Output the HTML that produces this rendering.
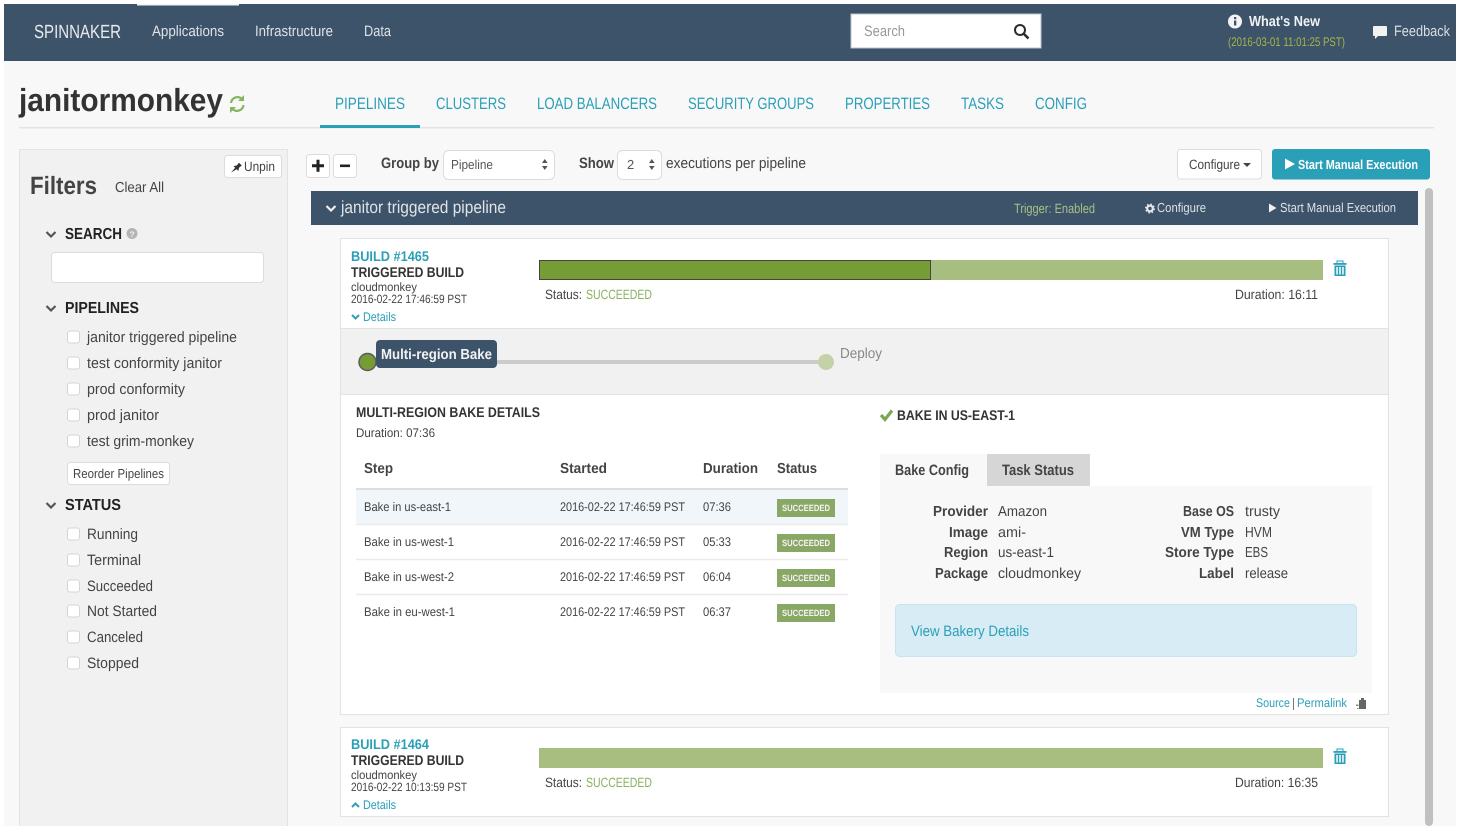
<!DOCTYPE html>
<html><head><meta charset="utf-8"><title>Spinnaker</title>
<style>
html,body{margin:0;padding:0;background:#fff;width:1462px;height:832px;overflow:hidden}
svg{display:block;position:absolute;left:0;top:0}
text{font-family:"Liberation Sans",sans-serif;font-size:14px;fill:#444;text-rendering:geometricPrecision}
.b{font-weight:bold}
.t{fill:#2a9fb8}
.w{fill:#e4e8ec}
.k{fill:#333}
</style></head><body>
<svg width="1462" height="832" viewBox="0 0 1462 832" xmlns="http://www.w3.org/2000/svg">
<defs>
<g id="trash" fill="#2a9fb8"><rect x="-6.500" y="-6" width="13" height="1.800"/><rect x="-3" y="-8" width="6" height="2.500" fill="none" stroke="#2a9fb8"/><path d="M-5.500-3.500h11v10.500h-11zM-3.700-2v7.500h1.500v-7.500zM-.75-2v7.500h1.500v-7.500zM2.200-2v7.500h1.500v-7.500z" fill-rule="evenodd"/></g>
<path id="chev" d="M-4.500-2L0 2.500 4.500-2" fill="none" stroke-width="2.200"/>
<rect id="cb" x="0" y="-6.500" width="12" height="12" rx="2.500" fill="#fff" stroke="#d4d4d4"/>
</defs>

<rect x="4" y="4" width="1452" height="822" fill="#f8f8f8"/>

<!-- top nav -->
<rect x="4" y="4" width="1452" height="57" fill="#3c5369"/>
<rect x="137" y="4" width="102" height="1.500" fill="#f4f4f4"/>
<text x="34" y="38" style="font-size:19px;fill:#e8ebee" textLength="87" lengthAdjust="spacingAndGlyphs">SPINNAKER</text>
<text x="152" y="36" style="font-size:15px;fill:#dfe3e7" textLength="72" lengthAdjust="spacingAndGlyphs">Applications</text>
<text x="255" y="36" style="font-size:15px;fill:#dfe3e7" textLength="78" lengthAdjust="spacingAndGlyphs">Infrastructure</text>
<text x="364" y="36" style="font-size:15px;fill:#dfe3e7" textLength="27" lengthAdjust="spacingAndGlyphs">Data</text>
<rect x="851" y="14" width="190" height="34" fill="#fff" stroke="#bcc6cf"/>
<text x="864" y="36" style="font-size:15px;fill:#999" textLength="41" lengthAdjust="spacingAndGlyphs">Search</text>
<circle cx="1020" cy="30" r="5" fill="none" stroke="#2b2b2b" stroke-width="2"/><path d="M1024 34l4.500 4.500" stroke="#2b2b2b" stroke-width="2.600"/>
<circle cx="1235" cy="21.500" r="7" fill="#f4f4f4"/><rect x="1234" y="20.500" width="2.300" height="5" fill="#3c5369"/><rect x="1234" y="17" width="2.300" height="2.200" fill="#3c5369"/>
<text x="1249" y="26" class="b" style="font-size:14.500px;fill:#f0f2f4" textLength="71" lengthAdjust="spacingAndGlyphs">What's New</text>
<text x="1228" y="46" style="font-size:12.500px;fill:#a6b548" textLength="117" lengthAdjust="spacingAndGlyphs">(2016-03-01 11:01:25 PST)</text>
<path d="M1374 26h12a1 1 0 0 1 1 1v8a1 1 0 0 1-1 1h-8l-3 3v-3h-1a1 1 0 0 1-1-1v-8a1 1 0 0 1 1-1z" fill="#f2f2f2"/>
<text x="1394" y="36" style="font-size:15px;fill:#d8dde2" textLength="56" lengthAdjust="spacingAndGlyphs">Feedback</text>

<!-- title + tabs -->
<text x="19" y="111" class="b" style="font-size:32px;fill:#333" textLength="204" lengthAdjust="spacingAndGlyphs">janitormonkey</text>
<g fill="none" stroke="#86b660" stroke-width="2.200"><path d="M231 103a6.500 6.500 0 0 1 11-4"/><path d="M243.500 105a6.500 6.500 0 0 1-11 4"/></g>
<path d="M244 95v6h-6zM230 113v-6h6z" fill="#86b660"/>
<rect x="19" y="127" width="1415" height="1.500" fill="#e3e3e3"/>
<rect x="320" y="125" width="100" height="3" fill="#2a9fb8"/>
<g>
<text x="335" y="109" class="t" style="font-size:16.500px" textLength="70" lengthAdjust="spacingAndGlyphs">PIPELINES</text>
<text x="436" y="109" class="t" style="font-size:16.500px" textLength="70" lengthAdjust="spacingAndGlyphs">CLUSTERS</text>
<text x="537" y="109" class="t" style="font-size:16.500px" textLength="120" lengthAdjust="spacingAndGlyphs">LOAD BALANCERS</text>
<text x="688" y="109" class="t" style="font-size:16.500px" textLength="126" lengthAdjust="spacingAndGlyphs">SECURITY GROUPS</text>
<text x="845" y="109" class="t" style="font-size:16.500px" textLength="85" lengthAdjust="spacingAndGlyphs">PROPERTIES</text>
<text x="961" y="109" class="t" style="font-size:16.500px" textLength="43" lengthAdjust="spacingAndGlyphs">TASKS</text>
<text x="1035" y="109" class="t" style="font-size:16.500px" textLength="52" lengthAdjust="spacingAndGlyphs">CONFIG</text>
</g>

<!-- filters panel -->
<rect x="19.500" y="149.500" width="268" height="677" fill="#f1f1f1" stroke="#e3e3e3"/>
<rect x="224.500" y="155.500" width="57" height="22" rx="3" fill="#fff" stroke="#dcdcdc"/>
<path d="M231 172.500l4.200-4.700-1.700-1.700 3.200-.6 2.300-2.800 2.800 2.800-2.800 2.300-.6 3.200-1.700-1.700z" fill="#333"/>
<text x="244" y="171" style="font-size:13.500px;fill:#444" textLength="31" lengthAdjust="spacingAndGlyphs">Unpin</text>
<text x="30" y="194" class="b" style="font-size:25px;fill:#444" textLength="67" lengthAdjust="spacingAndGlyphs">Filters</text>
<text x="115" y="192" style="font-size:14.500px;fill:#444" textLength="49" lengthAdjust="spacingAndGlyphs">Clear All</text>

<use href="#chev" x="51" y="234" stroke="#555"/>
<text x="65" y="239" class="b" style="font-size:16px;fill:#222" textLength="57" lengthAdjust="spacingAndGlyphs">SEARCH</text>
<circle cx="132" cy="233.500" r="5.500" fill="#b4b4b4"/><text x="129.800" y="237" class="b" style="font-size:8px;fill:#f1f1f1">?</text>
<rect x="51.500" y="252.500" width="212" height="30" rx="3" fill="#fff" stroke="#dcdcdc"/>

<use href="#chev" x="51" y="308" stroke="#555"/>
<text x="65" y="313" class="b" style="font-size:16px;fill:#222" textLength="74" lengthAdjust="spacingAndGlyphs">PIPELINES</text>
<use href="#cb" x="67.500" y="337.500"/><text x="87" y="342" style="font-size:15px" textLength="150" lengthAdjust="spacingAndGlyphs">janitor triggered pipeline</text>
<use href="#cb" x="67.500" y="363.500"/><text x="87" y="368" style="font-size:15px" textLength="135" lengthAdjust="spacingAndGlyphs">test conformity janitor</text>
<use href="#cb" x="67.500" y="389.500"/><text x="87" y="394" style="font-size:15px" textLength="98" lengthAdjust="spacingAndGlyphs">prod conformity</text>
<use href="#cb" x="67.500" y="415.500"/><text x="87" y="420" style="font-size:15px" textLength="72" lengthAdjust="spacingAndGlyphs">prod janitor</text>
<use href="#cb" x="67.500" y="441.500"/><text x="87" y="446" style="font-size:15px" textLength="107" lengthAdjust="spacingAndGlyphs">test grim-monkey</text>
<rect x="67.500" y="462.500" width="102" height="22" rx="3" fill="#fff" stroke="#dcdcdc"/>
<text x="73" y="478" style="font-size:13px" textLength="91" lengthAdjust="spacingAndGlyphs">Reorder Pipelines</text>

<use href="#chev" x="51" y="505" stroke="#555"/>
<text x="65" y="510" class="b" style="font-size:16px;fill:#222" textLength="56" lengthAdjust="spacingAndGlyphs">STATUS</text>
<use href="#cb" x="67.500" y="534.500"/><text x="87" y="539" style="font-size:15px" textLength="51" lengthAdjust="spacingAndGlyphs">Running</text>
<use href="#cb" x="67.500" y="560.500"/><text x="87" y="565" style="font-size:15px" textLength="54" lengthAdjust="spacingAndGlyphs">Terminal</text>
<use href="#cb" x="67.500" y="586.500"/><text x="87" y="591" style="font-size:15px" textLength="66" lengthAdjust="spacingAndGlyphs">Succeeded</text>
<use href="#cb" x="67.500" y="611.500"/><text x="87" y="616" style="font-size:15px" textLength="70" lengthAdjust="spacingAndGlyphs">Not Started</text>
<use href="#cb" x="67.500" y="637.500"/><text x="87" y="642" style="font-size:15px" textLength="56" lengthAdjust="spacingAndGlyphs">Canceled</text>
<use href="#cb" x="67.500" y="663.500"/><text x="87" y="668" style="font-size:15px" textLength="52" lengthAdjust="spacingAndGlyphs">Stopped</text>

<!-- toolbar -->
<rect x="306.500" y="154.500" width="23" height="23" rx="3" fill="#fff" stroke="#dcdcdc"/>
<path d="M312 165.800h12M318 159.800v12" stroke="#222" stroke-width="3"/>
<rect x="333.500" y="154.500" width="23" height="23" rx="3" fill="#fff" stroke="#dcdcdc"/>
<path d="M340 165.800h10" stroke="#222" stroke-width="2.600"/>
<text x="381" y="168" class="b" style="font-size:15px" textLength="58" lengthAdjust="spacingAndGlyphs">Group by</text>
<rect x="443.500" y="150.500" width="111" height="29" rx="5" fill="#fff" stroke="#dcdcdc"/>
<text x="451" y="169" style="font-size:13px;fill:#555" textLength="42" lengthAdjust="spacingAndGlyphs">Pipeline</text>
<path d="M542 163l2.800-4 2.800 4zM542 166l2.800 4 2.800-4z" fill="#555"/>
<text x="579" y="168" class="b" style="font-size:15px" textLength="35" lengthAdjust="spacingAndGlyphs">Show</text>
<rect x="617.500" y="150.500" width="44" height="29" rx="5" fill="#fff" stroke="#dcdcdc"/>
<text x="627" y="169" style="font-size:13px;fill:#555">2</text>
<path d="M649 163l2.800-4 2.800 4zM649 166l2.800 4 2.800-4z" fill="#555"/>
<text x="666" y="168" style="font-size:15px" textLength="140" lengthAdjust="spacingAndGlyphs">executions per pipeline</text>
<rect x="1177.500" y="149.500" width="84" height="29.500" rx="3" fill="#fff" stroke="#dcdcdc"/>
<text x="1189" y="169" style="font-size:13.500px" textLength="51" lengthAdjust="spacingAndGlyphs">Configure</text>
<path d="M1243 163h8l-4 4z" fill="#444"/>
<rect x="1272" y="149" width="158" height="30.500" rx="3" fill="#2a9fb8"/>
<path d="M1285 158.500l10 5.500-10 5.500z" fill="#fff"/>
<text x="1298" y="169" class="b" style="font-size:13px;fill:#fff" textLength="120" lengthAdjust="spacingAndGlyphs">Start Manual Execution</text>

<!-- scrollbar -->
<rect x="1425" y="188" width="8" height="638" rx="4" fill="#c0c0c0"/>

<!-- pipeline header -->
<rect x="311" y="191" width="1107" height="34" fill="#3c5369"/>
<use href="#chev" x="331" y="208" stroke="#f0f0f0"/>
<text x="341" y="213" style="font-size:17.500px;fill:#e0e4e8" textLength="165" lengthAdjust="spacingAndGlyphs">janitor triggered pipeline</text>
<text x="1014" y="213" style="font-size:13.500px;fill:#a8c088" textLength="81" lengthAdjust="spacingAndGlyphs">Trigger: Enabled</text>
<circle cx="1150" cy="208.500" r="2.800" fill="none" stroke="#e8e8e8" stroke-width="2.200"/>
<circle cx="1150" cy="208.500" r="4.300" fill="none" stroke="#e8e8e8" stroke-width="1.400" stroke-dasharray="1.700 1.700"/>
<text x="1157" y="212" style="font-size:13px;fill:#dde1e5" textLength="49" lengthAdjust="spacingAndGlyphs">Configure</text>
<path d="M1269 203.500l7.500 4.500-7.500 4.500z" fill="#f0f0f0"/>
<text x="1280" y="212" style="font-size:13px;fill:#dde1e5" textLength="116" lengthAdjust="spacingAndGlyphs">Start Manual Execution</text>

<!-- build 1465 -->
<rect x="340.500" y="238.500" width="1048" height="476" fill="#fff" stroke="#e2e2e2"/>
<text x="351" y="261" class="t b" style="font-size:14px" textLength="78" lengthAdjust="spacingAndGlyphs">BUILD #1465</text>
<text x="351" y="277" class="b k" style="font-size:14px" textLength="113" lengthAdjust="spacingAndGlyphs">TRIGGERED BUILD</text>
<text x="351" y="291" style="font-size:12px" textLength="66" lengthAdjust="spacingAndGlyphs">cloudmonkey</text>
<text x="351" y="303" style="font-size:12px" textLength="116" lengthAdjust="spacingAndGlyphs">2016-02-22 17:46:59 PST</text>
<path d="M352 315l3.500 3.500 3.500-3.500" fill="none" stroke="#2a9fb8" stroke-width="2"/>
<text x="363" y="321" class="t" style="font-size:12.500px" textLength="33" lengthAdjust="spacingAndGlyphs">Details</text>
<rect x="539" y="260" width="784" height="20" fill="#a8be80"/>
<rect x="539.500" y="260.500" width="391" height="19" fill="#759c35" stroke="#444"/>
<text x="545" y="299" style="font-size:13.500px" textLength="37" lengthAdjust="spacingAndGlyphs">Status:</text>
<text x="586" y="299" style="font-size:13.500px;fill:#8ab060" textLength="66" lengthAdjust="spacingAndGlyphs">SUCCEEDED</text>
<text x="1235" y="299" style="font-size:13.500px" textLength="83" lengthAdjust="spacingAndGlyphs">Duration: 16:11</text>
<use href="#trash" x="1340" y="269"/>

<!-- stage strip -->
<rect x="341" y="328" width="1047" height="67" fill="#f1f1f1"/>
<path d="M341 328.500h1047M341 394.500h1047" stroke="#e2e2e2"/>
<rect x="375" y="360" width="450" height="4" fill="#cbcbcb"/>
<circle cx="367.500" cy="362" r="8.500" fill="#759c35" stroke="#5c5c5c" stroke-width="1.500"/>
<rect x="376" y="340" width="121" height="28" rx="4" fill="#3c5369"/>
<text x="381" y="359" class="b" style="font-size:14.500px;fill:#f2f2f2" textLength="111" lengthAdjust="spacingAndGlyphs">Multi-region Bake</text>
<circle cx="826" cy="362" r="8" fill="#c5d2a8"/>
<text x="840" y="358" style="font-size:14.500px;fill:#888" textLength="42" lengthAdjust="spacingAndGlyphs">Deploy</text>

<!-- stage details -->
<text x="356" y="417" class="b k" style="font-size:14px" textLength="184" lengthAdjust="spacingAndGlyphs">MULTI-REGION BAKE DETAILS</text>
<text x="356" y="437" style="font-size:12.500px" textLength="79" lengthAdjust="spacingAndGlyphs">Duration: 07:36</text>
<text x="364" y="473" class="b" style="font-size:14.500px" textLength="29" lengthAdjust="spacingAndGlyphs">Step</text>
<text x="560" y="473" class="b" style="font-size:14.500px" textLength="47" lengthAdjust="spacingAndGlyphs">Started</text>
<text x="703" y="473" class="b" style="font-size:14.500px" textLength="55" lengthAdjust="spacingAndGlyphs">Duration</text>
<text x="777" y="473" class="b" style="font-size:14.500px" textLength="40" lengthAdjust="spacingAndGlyphs">Status</text>
<rect x="356" y="490" width="492" height="34" fill="#f0f6f9"/>
<rect x="356" y="488" width="492" height="2" fill="#dedede"/>
<path d="M356 524.500h492M356 559.500h492M356 594.500h492" stroke="#ebebeb" stroke-width="1.500"/>

<text x="364" y="511" style="font-size:12.500px" textLength="87" lengthAdjust="spacingAndGlyphs">Bake in us-east-1</text>
<text x="560" y="511" style="font-size:12.500px" textLength="125" lengthAdjust="spacingAndGlyphs">2016-02-22 17:46:59 PST</text>
<text x="703" y="511" style="font-size:12.500px" textLength="28" lengthAdjust="spacingAndGlyphs">07:36</text>
<rect x="777" y="499" width="58" height="18" fill="#8aa865"/>
<text x="782" y="511" class="b" style="font-size:9px;fill:#f4f4f4" textLength="48" lengthAdjust="spacingAndGlyphs">SUCCEEDED</text>

<text x="364" y="546" style="font-size:12.500px" textLength="90" lengthAdjust="spacingAndGlyphs">Bake in us-west-1</text>
<text x="560" y="546" style="font-size:12.500px" textLength="125" lengthAdjust="spacingAndGlyphs">2016-02-22 17:46:59 PST</text>
<text x="703" y="546" style="font-size:12.500px" textLength="28" lengthAdjust="spacingAndGlyphs">05:33</text>
<rect x="777" y="534" width="58" height="18" fill="#8aa865"/>
<text x="782" y="546" class="b" style="font-size:9px;fill:#f4f4f4" textLength="48" lengthAdjust="spacingAndGlyphs">SUCCEEDED</text>

<text x="364" y="581" style="font-size:12.500px" textLength="90" lengthAdjust="spacingAndGlyphs">Bake in us-west-2</text>
<text x="560" y="581" style="font-size:12.500px" textLength="125" lengthAdjust="spacingAndGlyphs">2016-02-22 17:46:59 PST</text>
<text x="703" y="581" style="font-size:12.500px" textLength="28" lengthAdjust="spacingAndGlyphs">06:04</text>
<rect x="777" y="569" width="58" height="18" fill="#8aa865"/>
<text x="782" y="581" class="b" style="font-size:9px;fill:#f4f4f4" textLength="48" lengthAdjust="spacingAndGlyphs">SUCCEEDED</text>

<text x="364" y="616" style="font-size:12.500px" textLength="91" lengthAdjust="spacingAndGlyphs">Bake in eu-west-1</text>
<text x="560" y="616" style="font-size:12.500px" textLength="125" lengthAdjust="spacingAndGlyphs">2016-02-22 17:46:59 PST</text>
<text x="703" y="616" style="font-size:12.500px" textLength="28" lengthAdjust="spacingAndGlyphs">06:37</text>
<rect x="777" y="604" width="58" height="18" fill="#8aa865"/>
<text x="782" y="616" class="b" style="font-size:9px;fill:#f4f4f4" textLength="48" lengthAdjust="spacingAndGlyphs">SUCCEEDED</text>

<!-- right detail -->
<path d="M881 415l4 4.500 7-9" fill="none" stroke="#78a856" stroke-width="3.200"/>
<text x="897" y="420" class="b k" style="font-size:14px" textLength="118" lengthAdjust="spacingAndGlyphs">BAKE IN US-EAST-1</text>
<rect x="880" y="454" width="107" height="32" fill="#f8f8f8"/>
<rect x="987" y="454" width="103" height="32" fill="#d6d6d6"/>
<text x="895" y="475" style="font-size:15px;font-weight:bold;fill:#444" textLength="74" lengthAdjust="spacingAndGlyphs">Bake Config</text>
<text x="1002" y="475" style="font-size:15px;font-weight:bold;fill:#444" textLength="72" lengthAdjust="spacingAndGlyphs">Task Status</text>
<rect x="880" y="486" width="492" height="207" fill="#f8f8f8"/>

<text x="933" y="516" class="b" style="font-size:14.500px" textLength="55" lengthAdjust="spacingAndGlyphs">Provider</text>
<text x="949" y="537" class="b" style="font-size:14.500px" textLength="39" lengthAdjust="spacingAndGlyphs">Image</text>
<text x="944" y="557" class="b" style="font-size:14.500px" textLength="44" lengthAdjust="spacingAndGlyphs">Region</text>
<text x="935" y="578" class="b" style="font-size:14.500px" textLength="53" lengthAdjust="spacingAndGlyphs">Package</text>
<text x="998" y="516" style="font-size:14.500px" textLength="49" lengthAdjust="spacingAndGlyphs">Amazon</text>
<text x="998" y="537" style="font-size:14.500px" textLength="28" lengthAdjust="spacingAndGlyphs">ami-</text>
<text x="998" y="557" style="font-size:14.500px" textLength="56" lengthAdjust="spacingAndGlyphs">us-east-1</text>
<text x="998" y="578" style="font-size:14.500px" textLength="83" lengthAdjust="spacingAndGlyphs">cloudmonkey</text>
<text x="1183" y="516" class="b" style="font-size:14.500px" textLength="51" lengthAdjust="spacingAndGlyphs">Base OS</text>
<text x="1181" y="537" class="b" style="font-size:14.500px" textLength="53" lengthAdjust="spacingAndGlyphs">VM Type</text>
<text x="1165" y="557" class="b" style="font-size:14.500px" textLength="69" lengthAdjust="spacingAndGlyphs">Store Type</text>
<text x="1199" y="578" class="b" style="font-size:14.500px" textLength="35" lengthAdjust="spacingAndGlyphs">Label</text>
<text x="1245" y="516" style="font-size:14.500px" textLength="35" lengthAdjust="spacingAndGlyphs">trusty</text>
<text x="1245" y="537" style="font-size:14.500px" textLength="27" lengthAdjust="spacingAndGlyphs">HVM</text>
<text x="1245" y="557" style="font-size:14.500px" textLength="23" lengthAdjust="spacingAndGlyphs">EBS</text>
<text x="1245" y="578" style="font-size:14.500px" textLength="43" lengthAdjust="spacingAndGlyphs">release</text>

<rect x="895.500" y="604.500" width="461" height="52" rx="4" fill="#d8ecf5" stroke="#c5e4ee"/>
<text x="911" y="636" class="t" style="font-size:15px" textLength="118" lengthAdjust="spacingAndGlyphs">View Bakery Details</text>
<text x="1256" y="707" class="t" style="font-size:12.500px" textLength="34" lengthAdjust="spacingAndGlyphs">Source</text>
<rect x="1293" y="698" width="1" height="12" fill="#777"/>
<text x="1297" y="707" class="t" style="font-size:12.500px" textLength="50" lengthAdjust="spacingAndGlyphs">Permalink</text>
<path d="M1359 700h2v-2h3v2h2v9h-7z" fill="#666"/>
<path d="M1356 704.500h2.500v1.500h-2.500zM1357 708h1.500v1h-1.500z" fill="#888"/>

<!-- build 1464 -->
<rect x="340.500" y="727.500" width="1048" height="89" fill="#fff" stroke="#e2e2e2"/>
<text x="351" y="749" class="t b" style="font-size:14px" textLength="78" lengthAdjust="spacingAndGlyphs">BUILD #1464</text>
<text x="351" y="765" class="b k" style="font-size:14px" textLength="113" lengthAdjust="spacingAndGlyphs">TRIGGERED BUILD</text>
<text x="351" y="779" style="font-size:12px" textLength="66" lengthAdjust="spacingAndGlyphs">cloudmonkey</text>
<text x="351" y="791" style="font-size:12px" textLength="116" lengthAdjust="spacingAndGlyphs">2016-02-22 10:13:59 PST</text>
<path d="M352 807l3.500-3.500 3.500 3.500" fill="none" stroke="#2a9fb8" stroke-width="2"/>
<text x="363" y="809" class="t" style="font-size:12.500px" textLength="33" lengthAdjust="spacingAndGlyphs">Details</text>
<rect x="539" y="748" width="784" height="20" fill="#a8be80"/>
<text x="545" y="787" style="font-size:13.500px" textLength="37" lengthAdjust="spacingAndGlyphs">Status:</text>
<text x="586" y="787" style="font-size:13.500px;fill:#8ab060" textLength="66" lengthAdjust="spacingAndGlyphs">SUCCEEDED</text>
<text x="1235" y="787" style="font-size:13.500px" textLength="83" lengthAdjust="spacingAndGlyphs">Duration: 16:35</text>
<use href="#trash" x="1340" y="757"/>

<!-- bottom clip -->
<rect x="0" y="826" width="1462" height="6" fill="#fff"/>
</svg>
</body></html>
